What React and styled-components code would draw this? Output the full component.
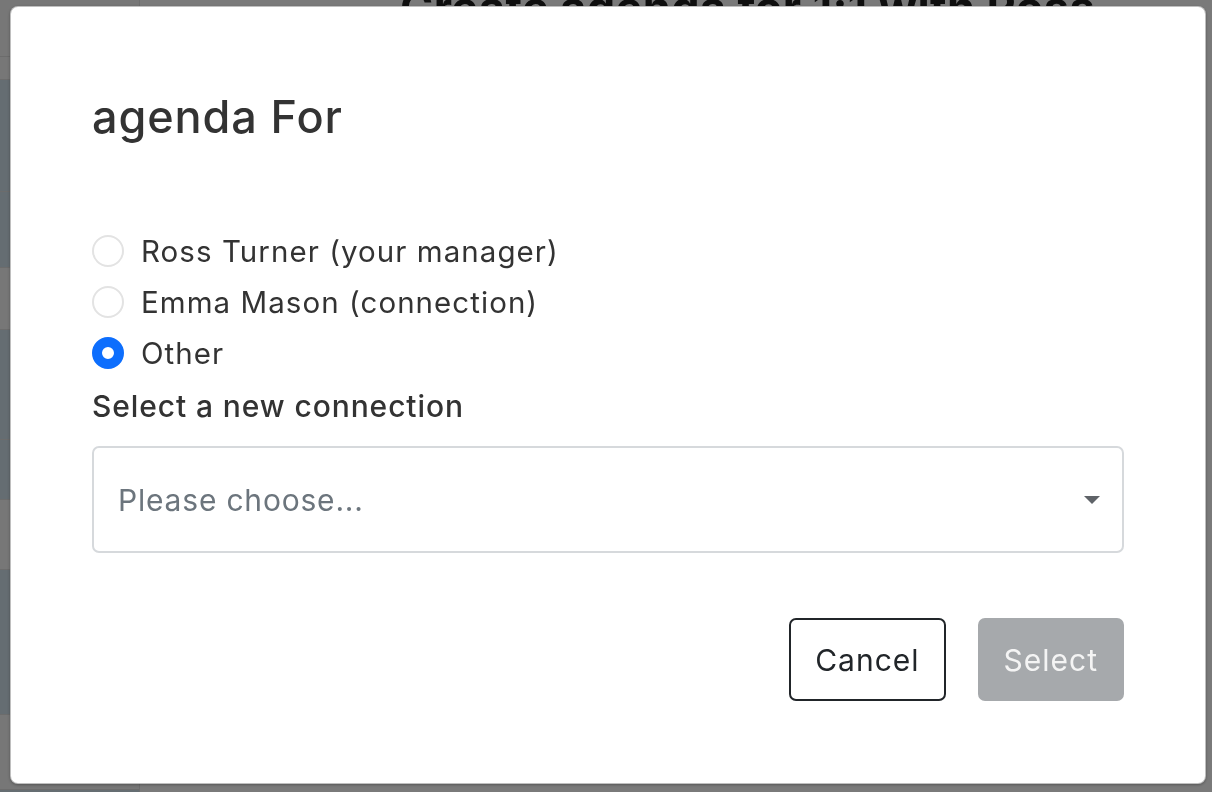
import React, { useState } from "react";
import styled, { createGlobalStyle } from "styled-components";

const GlobalStyle = createGlobalStyle`
  html, body {
    margin: 0;
    padding: 0;
    width: 100%;
    height: 100%;
    overflow: hidden;
    background: #ffffff;
    font-family: Inter, "Noto Sans", "Liberation Sans", sans-serif;
  }
  * { box-sizing: border-box; }
`;

const options = [
  { id: "ross", label: "Ross Turner (your manager)" },
  { id: "emma", label: "Emma Mason (connection)" },
  { id: "other", label: "Other" },
];

const sideRows = [
  { h: 57, tint: false },
  { h: 23, tint: false },
  { h: 112, tint: true },
  { h: 76, tint: true },
  { h: 62, tint: false },
  { h: 110, tint: true },
  { h: 60, tint: true },
  { h: 70, tint: false },
  { h: 145, tint: true },
  { h: 75, tint: false },
  { h: 100, tint: true },
];

export default function App() {
  const [choice, setChoice] = useState("other");

  return (
    <>
      <GlobalStyle />
      <Page>
        <Sidebar>
          {sideRows.map((row, i) => (
            <SideRow key={i} $h={row.h} $tint={row.tint} />
          ))}
        </Sidebar>
        <Main>
          <PageTitle>Create agenda for 1:1 with Ross</PageTitle>
        </Main>
      </Page>

      <Backdrop />

      <Modal role="dialog" aria-modal="true">
        <Title>agenda For</Title>

        <RadioGroup>
          {options.map((opt) => (
            <RadioRow key={opt.id}>
              <HiddenInput
                type="radio"
                name="agendaFor"
                checked={choice === opt.id}
                onChange={() => setChoice(opt.id)}
              />
              <RadioDot $checked={choice === opt.id} />
              <RadioText>{opt.label}</RadioText>
            </RadioRow>
          ))}
        </RadioGroup>

        <FieldLabel>Select a new connection</FieldLabel>
        <SelectBox>
          <Placeholder>Please choose...</Placeholder>
          <Caret viewBox="0 0 16 8" width="16" height="8">
            <path d="M0 0 L16 0 L8 8 Z" fill="#5f6368" />
          </Caret>
        </SelectBox>

        <Footer>
          <Button $variant="outline">Cancel</Button>
          <Button $variant="disabled" disabled>
            Select
          </Button>
        </Footer>
      </Modal>
    </>
  );
}

/* ------------------- STYLED COMPONENTS ------------------- */

const Page = styled.div`
  position: fixed;
  inset: 0;
  display: flex;
`;

const Sidebar = styled.div`
  width: 140px;
  display: flex;
  flex-direction: column;
  border-right: 1px solid #e6e6e6;
`;

const SideRow = styled.div`
  height: ${(p) => p.$h}px;
  flex-shrink: 0;
  background: ${(p) => (p.$tint ? "#d4e4ef" : "#f8f8f8")};
  border-bottom: 1px solid #e2e2e2;
`;

const Main = styled.div`
  flex: 1;
  padding-left: 260px;
`;

const PageTitle = styled.h1`
  margin: -20px 0 0;
  font-family: Inter, "Liberation Sans", sans-serif;
  font-size: 45px;
  font-weight: 700;
  letter-spacing: 0.4px;
  color: #212121;
  white-space: nowrap;
`;

const Backdrop = styled.div`
  position: fixed;
  inset: 0;
  background: rgba(0, 0, 0, 0.52);
`;

const Modal = styled.div`
  position: fixed;
  top: 6px;
  left: 10px;
  width: 1196px;
  height: 778px;
  background: #ffffff;
  border: 1px solid rgba(0, 0, 0, 0.25);
  border-radius: 8px;
  box-shadow: 0 1px 3px rgba(0, 0, 0, 0.3);
  padding: 84px 81px 0;
  display: flex;
  flex-direction: column;
  color: #333333;
`;

const Title = styled.h2`
  margin: 0;
  font-size: 45px;
  font-weight: 500;
  line-height: 52px;
  color: #333333;
  letter-spacing: 0.9px;
`;

const RadioGroup = styled.div`
  display: flex;
  flex-direction: column;
  gap: 9px;
  margin-top: 87px;
`;

const RadioRow = styled.label`
  display: flex;
  align-items: center;
  gap: 17px;
  height: 42px;
  cursor: pointer;
`;

const HiddenInput = styled.input`
  position: absolute;
  opacity: 0;
  width: 0;
  height: 0;
`;

const RadioDot = styled.span`
  width: 32px;
  height: 32px;
  border-radius: 50%;
  flex-shrink: 0;
  background: #ffffff;
  border: ${(p) => (p.$checked ? "10px solid #0d6efd" : "2px solid #e3e3e3")};
`;

const RadioText = styled.span`
  font-size: 29.5px;
  line-height: 42px;
  letter-spacing: 1.05px;
  color: #333333;
`;

const FieldLabel = styled.div`
  margin-top: 11px;
  font-size: 30px;
  font-weight: 500;
  line-height: 42px;
  letter-spacing: 0.9px;
  color: #333333;
`;

const SelectBox = styled.div`
  margin-top: 19px;
  height: 107px;
  border: 2px solid #d6d9dc;
  border-radius: 7px;
  display: flex;
  align-items: center;
  justify-content: space-between;
  padding: 0 22px 0 24px;
`;

const Placeholder = styled.span`
  font-size: 30px;
  letter-spacing: 0.8px;
  color: #6c757d;
`;

const Caret = styled.svg`
  display: block;
`;

const Footer = styled.div`
  display: flex;
  justify-content: flex-end;
  gap: 32px;
  margin-top: 65px;
`;

const Button = styled.button`
  height: 83px;
  padding: 0 24px;
  border-radius: 7px;
  font-family: Inter, "Liberation Sans", sans-serif;
  font-size: 30px;
  font-weight: 400;
  letter-spacing: 1px;
  cursor: ${(p) => (p.$variant === "disabled" ? "default" : "pointer")};
  background: ${(p) => (p.$variant === "disabled" ? "#a6a9ac" : "#ffffff")};
  color: ${(p) => (p.$variant === "disabled" ? "#f4f4f4" : "#212529")};
  border: ${(p) =>
    p.$variant === "disabled" ? "2px solid #a6a9ac" : "2px solid #212529"};
`;
